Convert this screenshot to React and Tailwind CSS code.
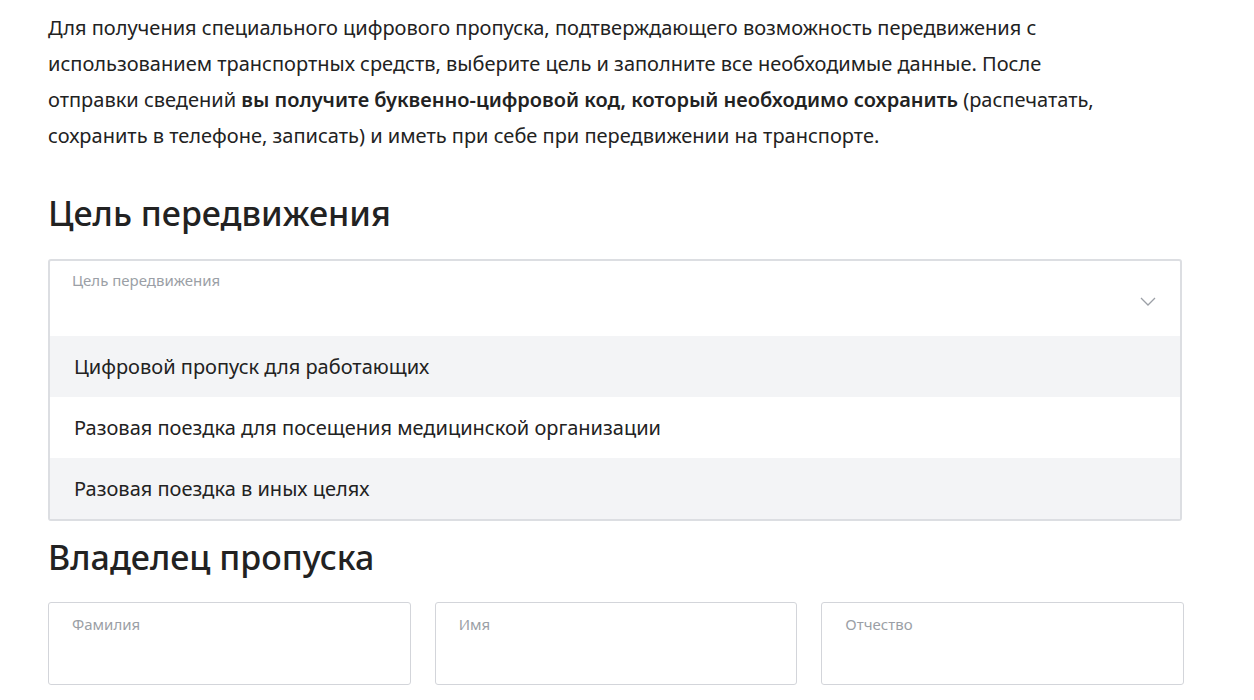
import React from "react";

function Field({ label }) {
  return (
    <div className="h-[83px] border border-[#d3d5da] rounded-[3px] px-[23px] pt-[10px]">
      <div className="text-[15px] text-[#9b9fa6]">{label}</div>
    </div>
  );
}

export default function App() {
  const options = [
    ["Цифровой пропуск для работающих", true],
    ["Разовая поездка для посещения медицинской организации", false],
    ["Разовая поездка в иных целях", true],
  ];
  return (
    <div className="bg-white text-[#222] pl-[48px] pr-[20px] pt-[10px]" style={{ fontFamily: "'Noto Sans', Inter, sans-serif" }}>
      <p className="text-[20px] leading-[36px] whitespace-nowrap">
        Для получения специального цифрового пропуска, подтверждающего возможность передвижения с<br />
        использованием транспортных средств, выберите цель и заполните все необходимые данные. После<br />
        отправки сведений <b className="font-semibold">вы получите буквенно-цифровой код, который необходимо сохранить</b> (распечатать,<br />
        сохранить в телефоне, записать) и иметь при себе при передвижении на транспорте.
      </p>
      <h2 className="text-[34px] font-medium mt-[35px] leading-[48px]">Цель передвижения</h2>
      <div className="mt-[22px] border-2 border-[#dcdee2] rounded-[3px] w-[1134px]">
        <div className="h-[75px] px-[22px] pt-[8px] flex justify-between">
          <div className="text-[15px] text-[#9b9fa6]">Цель передвижения</div>
          <svg width="16" height="10" viewBox="0 0 16 10" className="mt-[28px] mr-[2px]" fill="none" stroke="#9b9fa6" strokeWidth="1.3"><path d="M1 1l7 7 7-7" /></svg>
        </div>
        {options.map(([t, g]) => (
          <div key={t} className={`h-[61px] flex items-center px-[24px] text-[20px] ${g ? "bg-[#f3f4f6]" : "bg-white"}`}>{t}</div>
        ))}
      </div>
      <h2 className="text-[34px] font-medium mt-[12px] leading-[48px]">Владелец пропуска</h2>
      <div className="grid grid-cols-3 gap-[24px] mt-[21px] w-[1136px]">
        <Field label="Фамилия" />
        <Field label="Имя" />
        <Field label="Отчество" />
      </div>
    </div>
  );
}
